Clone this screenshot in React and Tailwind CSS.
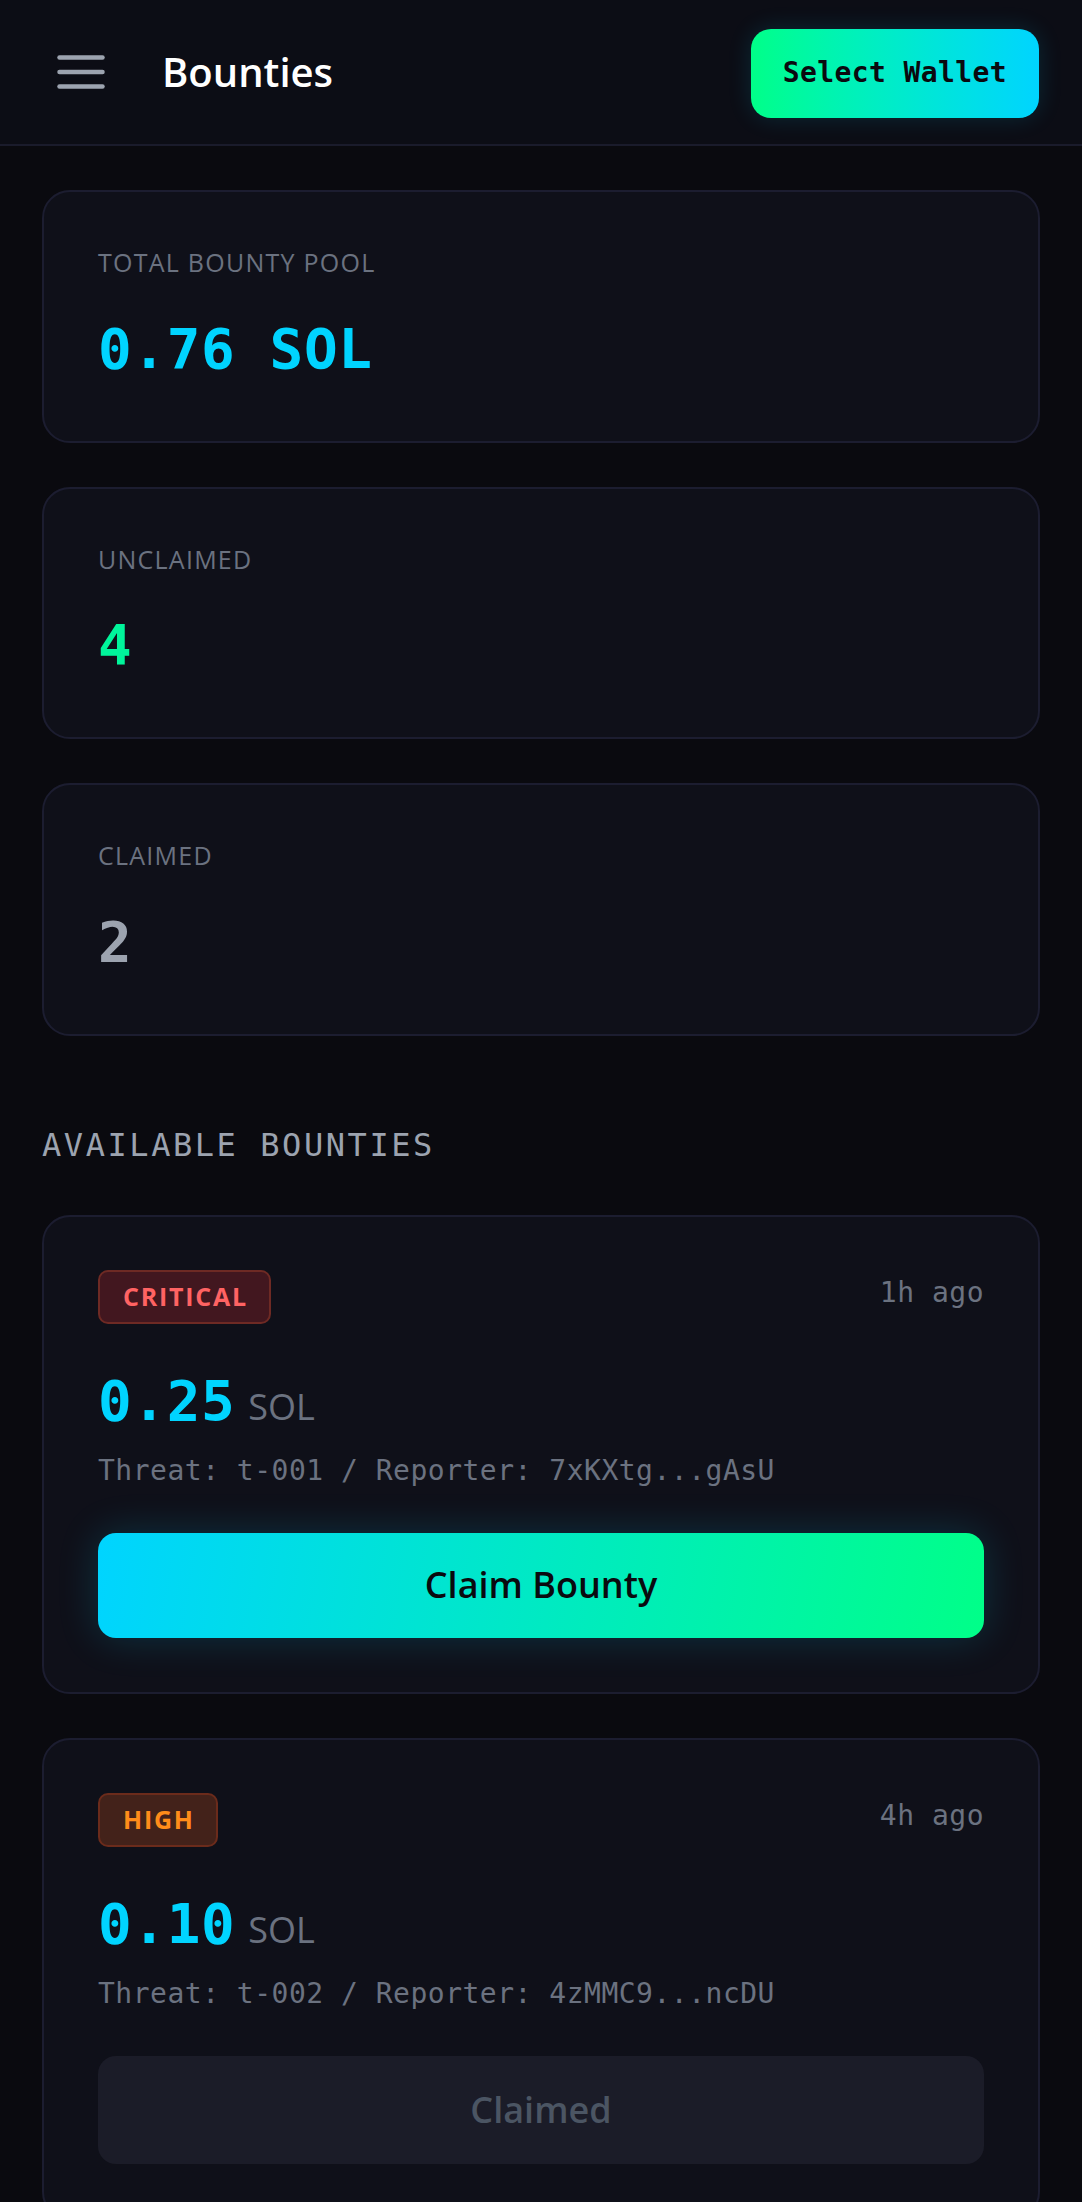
import React from "react";

const mono = "font-['DejaVu_Sans_Mono',monospace]";

const stats = [
  { label: "Total Bounty Pool", value: "0.76 SOL", color: "text-[#00d4ff]" },
  { label: "Unclaimed", value: "4", color: "text-[#00f59b]" },
  { label: "Claimed", value: "2", color: "text-[#9ca3af]" },
];

const bounties = [
  { severity: "CRITICAL", age: "1h ago", amount: "0.25", threat: "t-001", reporter: "7xKXtg...gAsU", claimed: false },
  { severity: "HIGH", age: "4h ago", amount: "0.10", threat: "t-002", reporter: "4zMMC9...ncDU", claimed: true },
];

const badgeStyles = {
  CRITICAL: "bg-[#42171f] border-[#6e2a24] text-[#ff6363]",
  HIGH: "bg-[#43221a] border-[#6b2b1b] text-[#ff8c1a]",
};

const MenuIcon = () => (
  <svg width="48" height="34" viewBox="0 0 48 34" fill="none">
    <line x1="2.5" y1="2.5" x2="45.5" y2="2.5" stroke="#9ca3af" strokeWidth="4.5" strokeLinecap="round" />
    <line x1="2.5" y1="17" x2="45.5" y2="17" stroke="#9ca3af" strokeWidth="4.5" strokeLinecap="round" />
    <line x1="2.5" y1="31.5" x2="45.5" y2="31.5" stroke="#9ca3af" strokeWidth="4.5" strokeLinecap="round" />
  </svg>
);

const StatCard = ({ label, value, color }) => (
  <div className="rounded-[28px] border-2 border-[#1c1d30] bg-[#0f1019] px-[54px] pt-[52px] pb-[59px]">
    <p className="text-[25px] leading-[37.5px] uppercase tracking-[0.05em] text-[#6b7280]">{label}</p>
    <p className={`mt-[33px] ${mono} text-[56px] font-bold leading-[67px] tracking-[0.6px] ${color}`}>{value}</p>
  </div>
);

const BountyCard = ({ bounty }) => (
  <div className="rounded-[28px] border-2 border-[#1c1d30] bg-[#0f1019] px-[54px] pt-[53px] pb-[54px]">
    {/* Top row */}
    <div className="flex items-start justify-between">
      <span
        className={`flex h-[54px] items-center rounded-[10px] border-2 pl-[23px] pr-[21px] text-[25px] font-bold leading-none tracking-[0.07em] ${badgeStyles[bounty.severity]}`}
      >
        {bounty.severity}
      </span>
      <span className={`mt-[3px] ${mono} text-[28px] leading-[40px] tracking-[0.5px] text-[#6b7280]`}>{bounty.age}</span>
    </div>

    {/* Amount */}
    <div className="mt-[43px] flex items-baseline">
      <span className={`${mono} text-[56px] font-bold leading-[67px] tracking-[0.6px] text-[#00d4ff]`}>{bounty.amount}</span>
      <span className="ml-[13px] text-[36px] leading-[43px] text-[#6b7280]">SOL</span>
    </div>

    <p className={`mt-[16px] ${mono} text-[28px] leading-[42px] tracking-[0.5px] text-[#6b7280]`}>
      Threat: {bounty.threat} / Reporter: {bounty.reporter}
    </p>

    {bounty.claimed ? (
      <button className="mt-[41px] flex h-[108px] w-full items-center justify-center rounded-[18px] bg-[#1b1c28] text-[36px] font-semibold text-[#4b5563]">
        Claimed
      </button>
    ) : (
      <button className="mt-[41px] flex h-[105px] w-full items-center justify-center rounded-[18px] bg-[linear-gradient(100deg,#00d4ff,#00ff88)] text-[36px] font-semibold text-[#0a0a0f] shadow-[0_0_40px_rgba(0,212,255,0.18)]">
        Claim Bounty
      </button>
    )}
  </div>
);

export default function App() {
  return (
    <div className="min-h-screen bg-[#0a0a0f] font-['Open_Sans',sans-serif]">
      {/* Header */}
      <header className="flex h-[146px] items-center justify-between border-b-2 border-[#1a1b2b] bg-[#0c0d15] pl-[57px] pr-[43px]">
        <div className="flex items-center gap-[57px]">
          <MenuIcon />
          <h1 className="text-[40px] font-semibold leading-[60px] text-white">Bounties</h1>
        </div>
        <button
          className={`mt-[2px] flex h-[89px] items-center rounded-[20px] bg-linear-to-r from-[#00ff88] to-[#00d4ff] px-[32px] ${mono} text-[28px] font-bold tracking-[0.4px] text-[#0a0a0f] shadow-[0_0_24px_rgba(0,212,255,0.14)]`}
        >
          Select Wallet
        </button>
      </header>

      {/* Content */}
      <main className="flex flex-col gap-[44px] px-[42px] pt-[44px]">
        {stats.map((s) => (
          <StatCard key={s.label} {...s} />
        ))}

        <h2 className={`mt-[41px] mb-[2px] ${mono} text-[32px] leading-[48px] tracking-[0.08em] text-[#9ca3af]`}>
          AVAILABLE BOUNTIES
        </h2>

        {bounties.map((b) => (
          <BountyCard key={b.threat} bounty={b} />
        ))}
      </main>
    </div>
  );
}
